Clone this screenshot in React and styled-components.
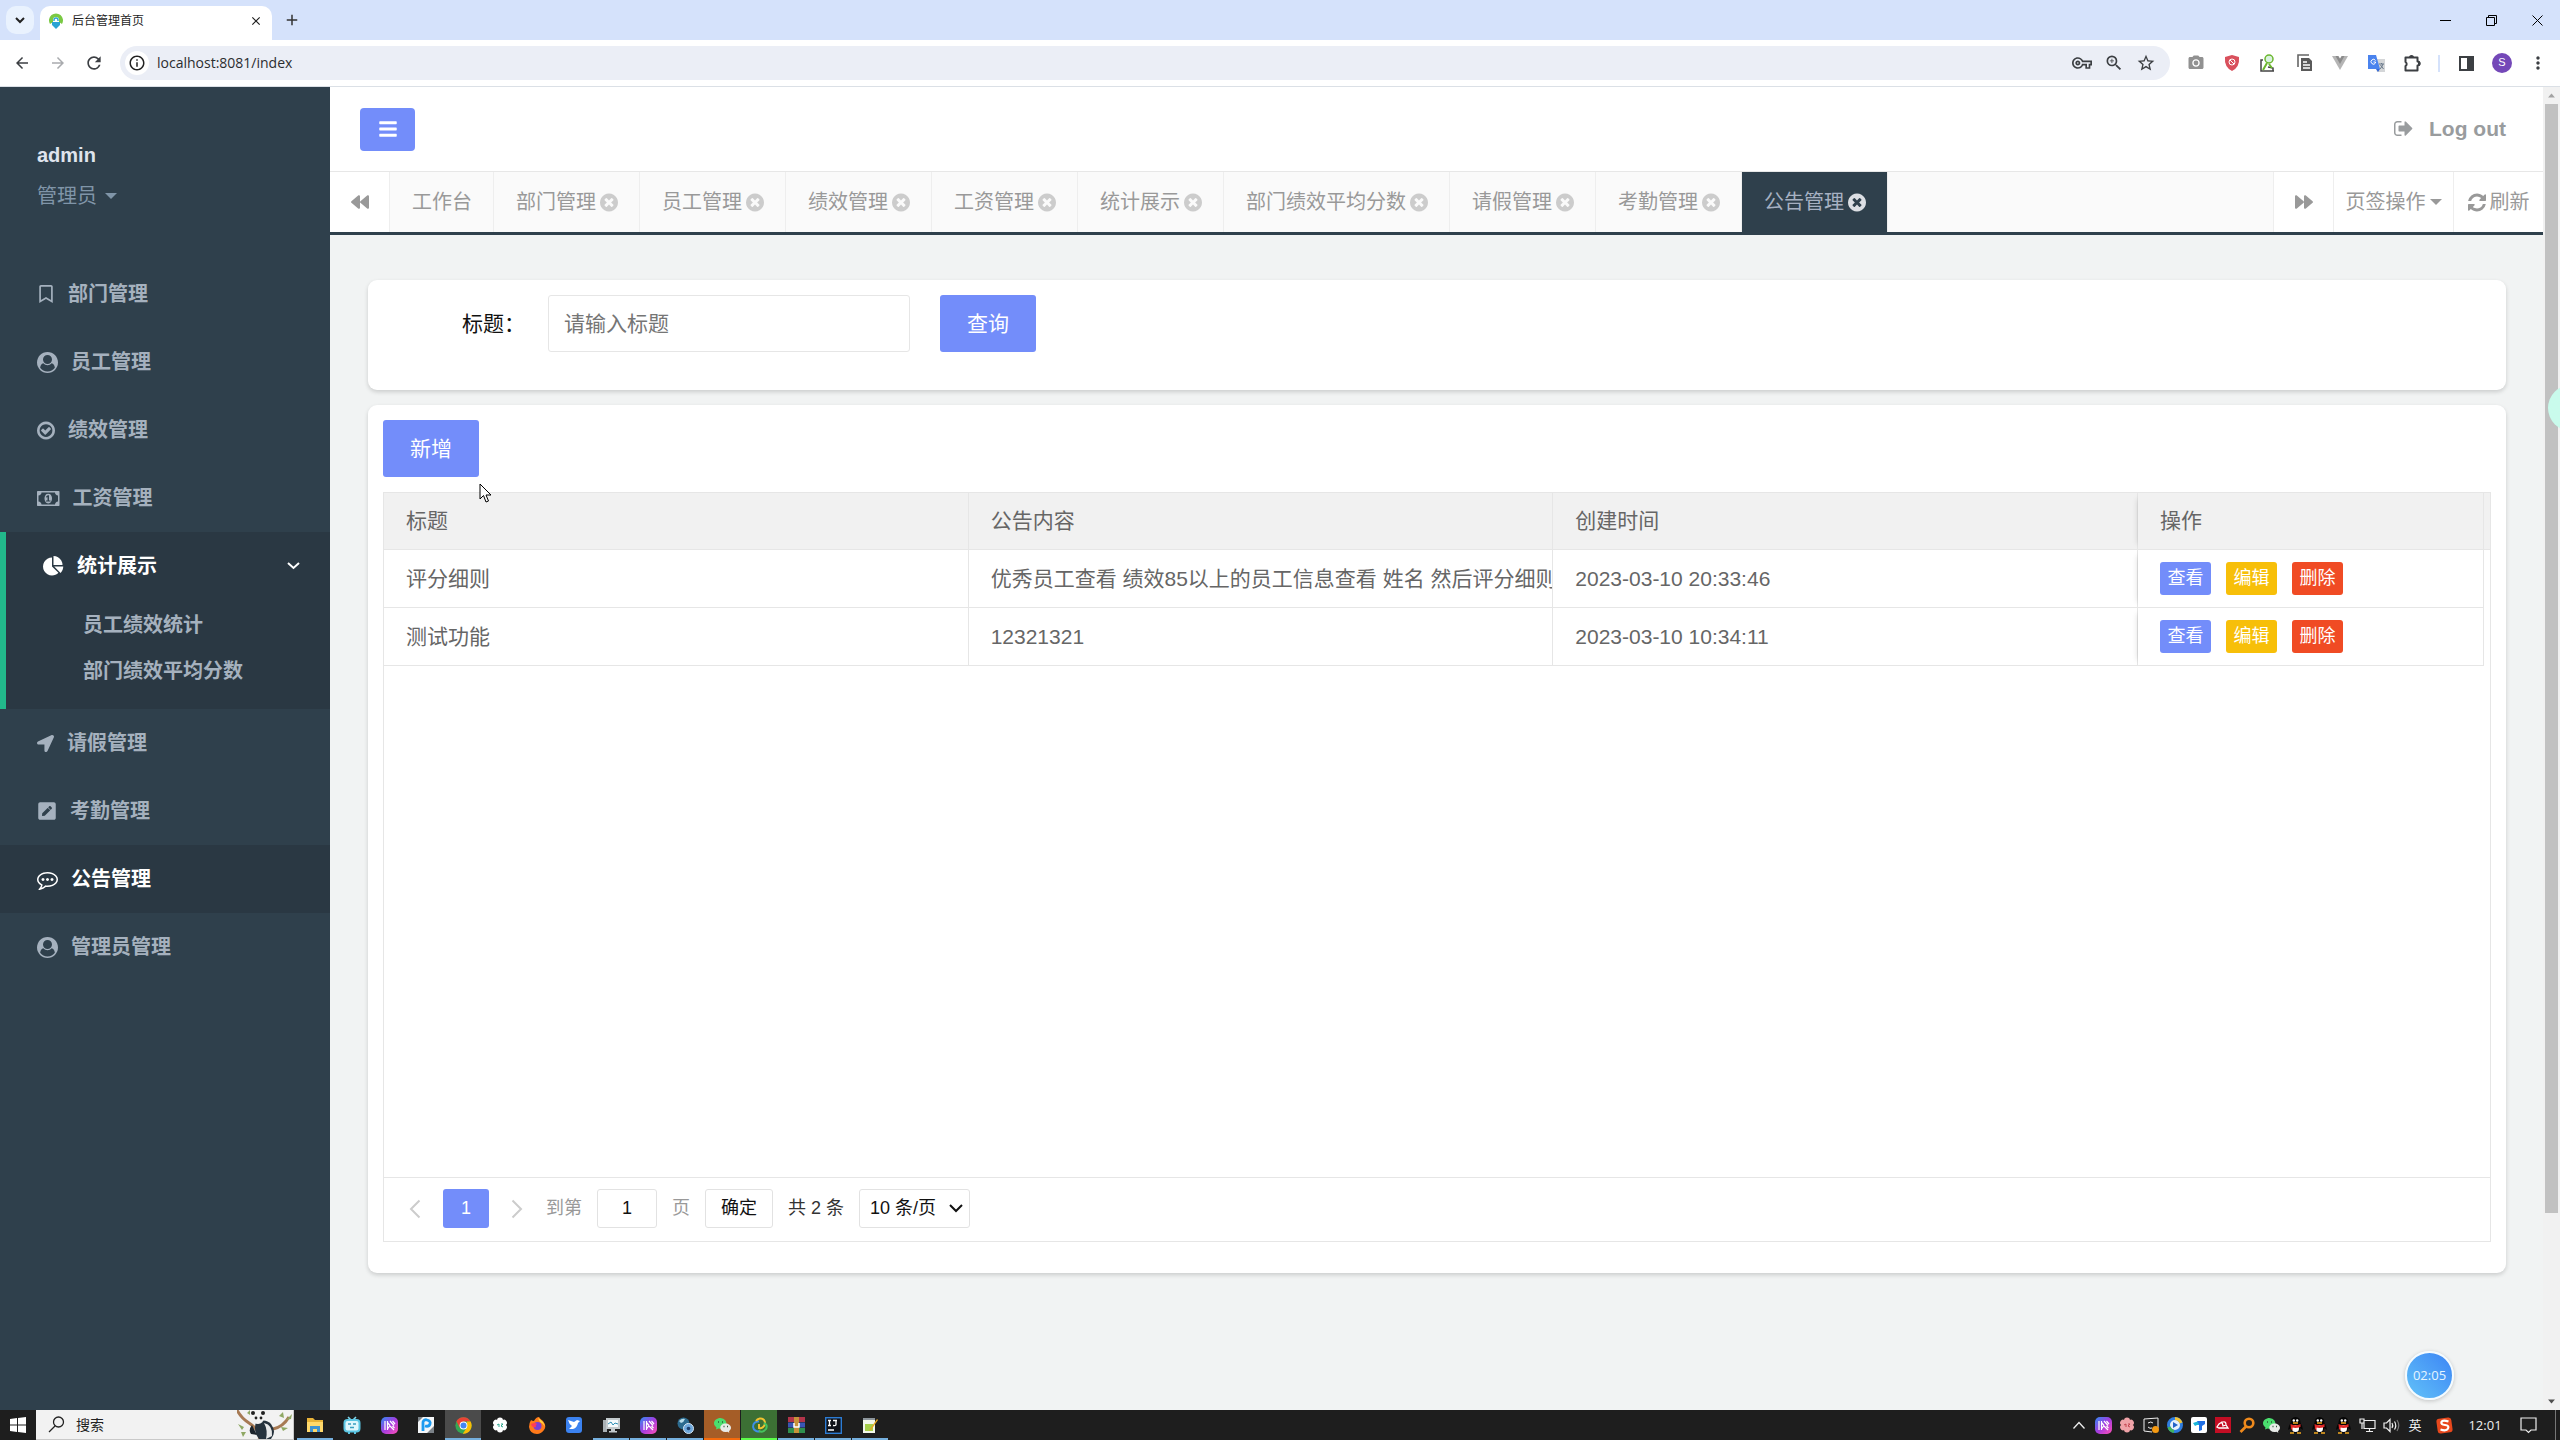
import React from 'react';
import styled, { createGlobalStyle, css } from 'styled-components';
import { FaBackward, FaBars, FaForward, FaLocationArrow, FaPenSquare, FaRegBookmark } from 'react-icons/fa';
import {
	MdAdd,
	MdArrowBack,
	MdArrowForward,
	MdClose,
	MdInfoOutline,
	MdMoreVert,
	MdOutlineExtension,
	MdOutlineVpnKey,
	MdPhotoCamera,
	MdRefresh,
	MdStarOutline,
	MdZoomIn,
} from 'react-icons/md';

const sans = `"Liberation Sans", "Noto Sans CJK SC", sans-serif`;
const systemFont = `"Open Sans", "Noto Sans CJK SC", sans-serif`;

/* Font Awesome 4 glyphs: x offset, width, path */
const glyphs = {
	user: [
		0,
		1792,
		'M1523 1339q-22-155-87.5-257.5t-184.5-118.5q-67 74-159.5 115.5t-195.5 41.5-195.5-41.5-159.5-115.5q-119 16-184.5 118.5t-87.5 257.5q106 150 271 237.5t356 87.5 356-87.5 271-237.5zm-243-699q0-159-112.5-271.5t-271.5-112.5-271.5 112.5-112.5 271.5 112.5 271.5 271.5 112.5 271.5-112.5 112.5-271.5zm512 256q0 182-71 347.5t-190.5 286-285.5 191.5-349 71q-182 0-348-71t-286-191-191-286-71-348 71-348 191-286 286-191 348-71 348 71 286 191 191 286 71 348z',
	],
	check: [
		128,
		1536,
		'M1299 813l-422 422q-19 19-45 19t-45-19l-294-294q-19-19-19-45t19-45l102-102q19-19 45-19t45 19l147 147 275-275q19-19 45-19t45 19l102 102q19 19 19 45t-19 45zm141 83q0-148-73-273t-198-198-273-73-273 73-198 198-73 273 73 273 198 198 273 73 273-73 198-198 73-273zm224 0q0 209-103 385.5t-279.5 279.5-385.5 103-385.5-103-279.5-279.5-103-385.5 103-385.5 279.5-279.5 385.5-103 385.5 103 279.5 279.5 103 385.5z',
	],
	money: [
		0,
		1920,
		'M768 1152h384v-96h-128v-448h-114l-148 137 77 80q42-37 55-57h2v288h-128v96zm512-256q0 70-21 142t-59.5 134-101.5 101-138 39-138-39-101.5-101-59.5-134-21-142 21-142 59.5-134 101.5-101 138-39 138 39 101.5 101 59.5 134 21 142zm512 256v-512q-106 0-181-75t-75-181h-1152q0 106-75 181t-181 75v512q106 0 181 75t75 181h1152q0-106 75-181t181-75zm128-832v1152q0 26-19 45t-45 19h-1792q-26 0-45-19t-19-45v-1152q0-26 19-45t45-19h1792q26 0 45 19t19 45z',
	],
	pie: [
		0,
		1792,
		'M768 890l546 546q-106 108-247.5 168t-298.5 60q-209 0-385.5-103t-279.5-279.5-103-385.5 103-385.5 279.5-279.5 385.5-103v762zm187 6h773q0 157-60 298.5t-168 247.5zm709-128h-768v-768q209 0 385.5 103t279.5 279.5 103 385.5z',
	],
	comment: [
		0,
		1792,
		'M640 896q0 53-37.5 90.5t-90.5 37.5-90.5-37.5-37.5-90.5 37.5-90.5 90.5-37.5 90.5 37.5 37.5 90.5zm384 0q0 53-37.5 90.5t-90.5 37.5-90.5-37.5-37.5-90.5 37.5-90.5 90.5-37.5 90.5 37.5 37.5 90.5zm384 0q0 53-37.5 90.5t-90.5 37.5-90.5-37.5-37.5-90.5 37.5-90.5 90.5-37.5 90.5 37.5 37.5 90.5zm-512-512q-204 0-381.5 69.5t-282 187.5-104.5 255q0 112 71.5 213.5t201.5 175.5l87 50-27 96q-24 91-70 172 152-63 275-171l43-38 57 6q69 8 130 8 204 0 381.5-69.5t282-187.5 104.5-255-104.5-255-282-187.5-381.5-69.5zm896 512q0 174-120 321.5t-326 233-450 85.5q-70 0-145-8-198 175-460 242-49 14-114 22h-5q-15 0-27-10.5t-16-27.5v-1q-3-4-.5-12t2-10 4.5-9.5l6-9 7-8.5 8-9q7-8 31-34.5t34.5-38 31-39.5 32.5-51 27-59 26-76q-157-89-247.5-220t-90.5-281q0-130 71-248.5t191-204.5 286-136.5 348-50.5q244 0 450 85.5t326 233 120 321.5z',
	],
	times: [
		128,
		1536,
		'M1277 1122q0-26-19-45l-181-181 181-181q19-19 19-45 0-27-19-46l-90-90q-19-19-46-19-26 0-45 19l-181 181-181-181q-19-19-45-19-27 0-46 19l-90 90q-19 19-19 46 0 26 19 45l181 181-181 181q-19 19-19 45 0 27 19 46l90 90q19 19 46 19 26 0 45-19l181-181 181 181q19 19 45 19 27 0 46-19l90-90q19-19 19-46zm387-226q0 209-103 385.5t-279.5 279.5-385.5 103-385.5-103-279.5-279.5-103-385.5 103-385.5 279.5-279.5 385.5-103 385.5 103 279.5 279.5 103 385.5z',
	],
	signOut: [
		64,
		1600,
		'M704 1440q0 4 1 20t.5 26.5-3 23.5-10 19.5-20.5 6.5h-320q-119 0-203.5-84.5t-84.5-203.5v-704q0-119 84.5-203.5t203.5-84.5h320q13 0 22.5 9.5t9.5 22.5q0 4 1 20t.5 26.5-3 23.5-10 19.5-20.5 6.5h-320q-66 0-113 47t-47 113v704q0 66 47 113t113 47h312l11.5 1 11.5 3 8 5.5 7 9 2 13.5zm928-544q0 26-19 45l-544 544q-19 19-45 19t-45-19-19-45v-288h-448q-26 0-45-19t-19-45v-384q0-26 19-45t45-19h448v-288q0-26 19-45t45-19 45 19l544 544q19 19 19 45z',
	],
	refresh: [
		0,
		1536,
		'M1511 1056q0 5-1 7-64 268-268 434.5t-478 166.5q-146 0-282.5-55t-243.5-157l-129 129q-19 19-45 19t-45-19-19-45v-448q0-26 19-45t45-19h448q26 0 45 19t19 45-19 45l-137 137q71 66 161 102t187 36q134 0 250-65t186-179q11-17 53-117 8-23 30-23h192q13 0 22.5 9.5t9.5 22.5zm25-800v448q0 26-19 45t-45 19h-448q-26 0-45-19t-19-45 19-45l138-138q-148-137-349-137-134 0-250 65t-186 179q-11 17-53 117-8 23-30 23h-199q-13 0-22.5-9.5t-9.5-22.5v-7q65-268 270-434.5t480-166.5q146 0 284 55.5t245 156.5l130-129q19-19 45-19t45 19 19 45z',
	],
};

const Glyph = ({ name }) => {
	const [x, width, d] = glyphs[name];
	return (
		<GlyphSvg viewBox={`${x} 0 ${width} 1792`} aria-hidden="true">
			<path fill="currentColor" d={d} />
		</GlyphSvg>
	);
};

const menu = [
	{ label: '部门管理', icon: <FaRegBookmark size={18} viewBox="0 0 384 512" /> },
	{ label: '员工管理', icon: <Glyph name="user" /> },
	{ label: '绩效管理', icon: <Glyph name="check" /> },
	{ label: '工资管理', icon: <Glyph name="money" /> },
	{
		label: '统计展示',
		icon: <Glyph name="pie" />,
		children: ['员工绩效统计', '部门绩效平均分数'],
	},
	{ label: '请假管理', icon: <FaLocationArrow size={17} /> },
	{ label: '考勤管理', icon: <FaPenSquare size={20} viewBox="0 0 448 512" /> },
	{ label: '公告管理', icon: <Glyph name="comment" />, active: true },
	{ label: '管理员管理', icon: <Glyph name="user" /> },
];

const tabs = ['部门管理', '员工管理', '绩效管理', '工资管理', '统计展示', '部门绩效平均分数', '请假管理', '考勤管理', '公告管理'];

const rows = [
	{
		title: '评分细则',
		content: '优秀员工查看 绩效85以上的员工信息查看 姓名 然后评分细则',
		time: '2023-03-10 20:33:46',
	},
	{ title: '测试功能', content: '12321321', time: '2023-03-10 10:34:11' },
];

/* ---- small drawings for the browser bar and the task bar ---- */

const Favicon = () => (
	<svg width="16" height="16" viewBox="0 0 16 16">
		<path d="M2 11a7 7 0 1 1 12 0l-3-2V7a3 3 0 0 0-6 0v2z" fill="#7ac943" />
		<path d="M6 8V7a2 2 0 0 1 4 0v1" fill="none" stroke="#2aa3d4" strokeWidth="1.4" />
		<path d="M4 9h8v3l-4 4-4-4z" fill="#2aa3d4" />
	</svg>
);

const RobotIcon = () => (
	<svg width="18" height="18" viewBox="0 0 18 18">
		<path d="M5 1l3 3M13 1l-3 3" stroke="#7fd8ee" strokeWidth="1.6" />
		<rect x="1.5" y="4" width="15" height="11.5" rx="3" fill="#dff7fd" stroke="#5cc6e3" strokeWidth="2" />
		<path d="M5 8h3M10 8h3M7 11.5h4" stroke="#3a9fc0" strokeWidth="1.5" />
		<path d="M5 17h2M11 17h2" stroke="#5cc6e3" strokeWidth="2" />
	</svg>
);

const MazeIcon = () => (
	<svg width="17" height="17" viewBox="0 0 17 17">
		<defs>
			<linearGradient id="maze" x1="0" y1="0" x2="1" y2="1">
				<stop offset="0" stopColor="#2f8bf5" />
				<stop offset=".5" stopColor="#a43ce0" />
				<stop offset="1" stopColor="#ff4fb4" />
			</linearGradient>
		</defs>
		<rect width="17" height="17" rx="5" fill="url(#maze)" />
		<path d="M4 4v9M6.500 4v9M9 8.500l-2.500-3M9 8.500l-2.500 3.500M9 4l4 4.500M11.500 4L14 7M9 9l4 4M11.500 9l2 2" stroke="#fff" strokeWidth="1.200" />
	</svg>
);

const FolderIcon = () => (
	<svg width="18" height="16" viewBox="0 0 18 16">
		<path d="M1 1h6l2 2h8v12H1z" fill="#e8b339" />
		<path d="M1 5h16v10H1z" fill="#ffd86b" />
		<path d="M4 15V9h10v6h-3v-3H7v3z" fill="#3f93d2" />
	</svg>
);

const PencilPIcon = () => (
	<svg width="16" height="16" viewBox="0 0 16 16">
		<path d="M0 0h16v16H0z" fill="#f4f6f8" />
		<path d="M9 16l7-7v7zM0 5l5-5H0z" fill="#7b8288" />
		<path d="M5 14V5a3 3 0 0 1 4-2q4 1 3 4t-5 2" fill="none" stroke="#1d9bf0" strokeWidth="2.800" />
	</svg>
);

const ChromeIcon = () => (
	<svg width="17" height="17" viewBox="0 0 48 48">
		<circle cx="24" cy="24" r="23" fill="#34a853" />
		<path d="M24 1a23 23 0 0 1 20 12H24L13 30 4 12A23 23 0 0 1 24 1z" fill="#ea4335" />
		<path d="M44 13a23 23 0 0 1-22 34l12-18V13z" fill="#fbbc05" />
		<circle cx="24" cy="24" r="11" fill="#fff" />
		<circle cx="24" cy="24" r="8.500" fill="#4285f4" />
	</svg>
);

const FlowerIcon = ({ color, core }) => (
	<svg width="16" height="16" viewBox="0 0 16 16">
		{[0, 60, 120, 180, 240, 300].map((angle) => (
			<circle key={angle} cx="8" cy="3.500" r="3" fill={color} transform={`rotate(${angle} 8 8)`} />
		))}
		<circle cx="8" cy="8" r="3.500" fill={color} />
		<path d="M5 8l2-1v3M9 7h2l-2 2 2 1" stroke={core} fill="none" />
	</svg>
);

const FirefoxIcon = () => (
	<svg width="17" height="17" viewBox="0 0 17 17">
		<path d="M2 3q1 1 3 1 2-4 5-4 1 2 4 4 4 5 1 9-3 4-7 4-7 0-8-7 0-4 2-7z" fill="#ff7a1a" />
		<path d="M9 1q6 3 7 9-2-4-5-5z" fill="#ffd53d" />
		<circle cx="8.500" cy="9" r="4" fill="#7b3fd6" />
		<path d="M2 7q4-2 6 0-2 1-1 3-4 1-5-3z" fill="#ff3d57" />
	</svg>
);

const BirdIcon = () => (
	<svg width="16" height="16" viewBox="0 0 16 16">
		<rect width="16" height="16" rx="3" fill="#3b82f0" />
		<path d="M2 3l6 2 3-2 3 1-2 2q-1 5-5 6H3l3-3q-3-2-4-6z" fill="#fff" />
	</svg>
);

const MonitorIcon = () => (
	<svg width="17" height="16" viewBox="0 0 17 16">
		<path d="M0 3h4v12H0z" fill="#aab1b5" />
		<path d="M3 1h14v11H3z" fill="#c3cacd" />
		<path d="M5 3h10v7H5z" fill="#f6fbfd" />
		<path d="M5 7l3-2 2 3 2-2 3 1" stroke="#2e8fb5" fill="none" />
		<path d="M8 12h4v2H8zM6 14h8v1.500H6z" fill="#c5cbce" />
	</svg>
);

const GlobesIcon = () => (
	<svg width="17" height="17" viewBox="0 0 17 17">
		<circle cx="6.500" cy="6.500" r="6" fill="#2c6b8f" />
		<path d="M2 4q3-3 6-2-1 3-4 4zM7 9l4-3v5z" fill="#b8dbe8" />
		<circle cx="11.500" cy="11.500" r="5" fill="#6fa8dc" stroke="#d7e6f2" />
		<circle cx="11.500" cy="11.500" r="1.800" fill="#1c3f6e" />
	</svg>
);

const WechatIcon = () => (
	<svg width="17" height="15" viewBox="0 0 17 15">
		<path d="M6.500 0C3 0 0 2.300 0 5.300 0 7 1 8.500 2.500 9.500L2 11.500l2.500-1q6 1 8-3.500Q13 1 6.500 0z" fill="#4ade6e" />
		<path d="M11.500 5.500c3 0 5.500 1.900 5.500 4.300 0 1.300-.8 2.500-2 3.300l.3 1.700-2-1c-4 .8-7-1-7-4 0-2.400 2.300-4.300 5.200-4.300z" fill="#e8ebe8" />
		<path d="M4 4h1M8 4h1M9.500 8.500h1M13 8.500h1" stroke="#2d5a3a" strokeWidth="1.300" />
	</svg>
);

const LoopIcon = () => (
	<svg width="17" height="17" viewBox="0 0 17 17" fill="none" strokeWidth="2">
		<path d="M8 4.500a5 5 0 1 0 1 9.500" stroke="#3f8fe8" />
		<path d="M5 4a5 5 0 0 1 8-1q2 3 0 6t-5 2V7" stroke="#f2c230" />
		<path d="M13 6q4 2 2 6-3 4-7 2" stroke="#46c25c" />
	</svg>
);

const ArchiveIcon = () => (
	<svg width="17" height="16" viewBox="0 0 17 16">
		<path d="M0 0h17v5H0z" fill="#b2344a" />
		<path d="M0 5.500h17v5H0z" fill="#3a56b5" />
		<path d="M0 11h17v5H0z" fill="#2f8f4e" />
		<path d="M6 0h5v16H6z" fill="#c7923a" />
		<path d="M6 6v4h5V6" stroke="#fff" strokeWidth="1.500" fill="none" />
	</svg>
);

const IdeIcon = () => (
	<svg width="17" height="17" viewBox="0 0 17 17">
		<rect x=".7" y=".7" width="15.600" height="15.600" fill="#10131a" stroke="#2c7cd4" strokeWidth="1.400" />
		<path d="M3 3.500h3M4.500 3.500v5M3 8.500h3M8 3.500h4M11 3.500v4q0 1.500-3 1M3 13h6" stroke="#fff" strokeWidth="1.300" fill="none" />
	</svg>
);

const NotepadIcon = () => (
	<svg width="16" height="17" viewBox="0 0 16 17">
		<path d="M1 2h12v14H1z" fill="#f3f7ea" />
		<path d="M3 7h8v7H3z" fill="#a6cf4a" />
		<path d="M1 1h12v2H1z" fill="#8d969c" />
		<path d="M15 2L8 12l-1 2 2-1 7-10z" fill="#e5a823" />
	</svg>
);

const PandaArt = () => (
	<svg width="56" height="29" viewBox="0 0 56 29">
		<path d="M0 0q4 8 12 13t14 16M22 29q4-8 14-10t16-12" fill="none" stroke="#a77a54" strokeWidth="3" />
		<path d="M19 12q10-4 15 2 6 8 0 15H22q-6-8-3-17z" fill="#26323d" />
		<path d="M27 13q9 2 8 13l-6 3q2-9-2-16z" fill="#e8e9ea" />
		<circle cx="21" cy="8" r="6" fill="#f2f2f2" />
		<circle cx="16" cy="3" r="2" fill="#222" />
		<circle cx="26" cy="3" r="2" fill="#222" />
		<circle cx="19" cy="8" r="1.400" fill="#222" />
		<circle cx="24" cy="8" r="1.400" fill="#222" />
		<path d="M15 15q-4 5-1 9l6 1z" fill="#1c242c" />
		<path d="M1 14l6 3-2 3zM10 3l3-3v5zM42 6l4-4 1 6zM49 10l6-6-1 5zM44 17l7 1-5 3zM4 22l5 0-3 5z" fill="#8fa864" />
	</svg>
);

const PlayIcon = () => (
	<svg width="16" height="16" viewBox="0 0 16 16">
		<circle cx="8" cy="8" r="6.500" fill="#e8f1fb" stroke="#2f7de0" strokeWidth="3" />
		<path d="M8 1.500A6.500 6.500 0 0 1 14 6" stroke="#f0c43a" strokeWidth="3" fill="none" />
		<path d="M2 10a6.500 6.500 0 0 0 5 4.500" stroke="#41b35d" strokeWidth="3" fill="none" />
		<path d="M6 5l5 3-5 3z" fill="#2563c9" />
	</svg>
);

const TravelIcon = () => (
	<svg width="16" height="16" viewBox="0 0 16 16">
		<rect width="16" height="16" rx="2" fill="#fff" />
		<path d="M2 6l6-2v4H6L4 9z" fill="#19b5d8" />
		<path d="M6 4h8v3l-3 2v4l-3 1V7z" fill="#1f6fe5" />
	</svg>
);

const CloudIcon = () => (
	<svg width="16" height="16" viewBox="0 0 16 16">
		<rect width="16" height="16" fill="#c40e24" />
		<path d="M4 11h9l-2-3-3 1-1-4-3 2-2 3zM8 5q3-1 3 3" stroke="#fff" fill="none" strokeWidth="1.300" />
	</svg>
);

const OrangeSearchIcon = () => (
	<svg width="16" height="16" viewBox="0 0 16 16" fill="none" stroke="#f08a1c" strokeWidth="2.600">
		<circle cx="10" cy="6" r="4.300" />
		<path d="M7 9.500L1.500 15" />
	</svg>
);

const PenguinIcon = () => (
	<svg width="15" height="17" viewBox="0 0 15 17">
		<path d="M7.500 0q5 0 5 6 3 5 2 7l-2-2q-1 5-5 5t-5-5l-2 2q-1-2 2-7 0-6 5-6z" fill="#050505" />
		<ellipse cx="7.500" cy="11.500" rx="3.500" ry="3.500" fill="#fff" />
		<path d="M2.500 7q5 2.500 10 0v3q-5 1.500-8 .5v3L3 12z" fill="#e02828" />
		<circle cx="5.800" cy="3.500" r="1.200" fill="#fff" />
		<circle cx="9.200" cy="3.500" r="1.200" fill="#fff" />
		<path d="M5 6h5M2 16h4M9 16h4" stroke="#f4a91f" strokeWidth="1.500" />
	</svg>
);

const SyncIcon = () => (
	<svg width="17" height="16" viewBox="0 0 17 16" fill="none" stroke="#eee">
		<path d="M1 2l14-1v10M1 2v12l8 1M5 6q3-2 5 0M5 10q2 2 4 1" />
		<circle cx="12.500" cy="12.500" r="3.500" fill="#f59a12" stroke="none" />
	</svg>
);

const ScreenIcon = () => (
	<svg width="17" height="15" viewBox="0 0 17 15" fill="none" stroke="#eee" strokeWidth="1.200">
		<path d="M5 2.500h11v8H5zM7 13.500h7M10.500 10.500v3M1 1h4v4H1zM3 5v6" />
	</svg>
);

const VolumeIcon = () => (
	<svg width="17" height="15" viewBox="0 0 17 15" fill="none" stroke="#eee" strokeWidth="1.200">
		<path d="M1 5h2.500L7 1.500v12L3.500 10H1zM9 5q1.500 2.500 0 5M11.500 3.500q2.500 4 0 8" />
		<path d="M14 2q3.500 5.500 0 11" stroke="#777" />
	</svg>
);

const SogouIcon = () => (
	<svg width="17" height="17" viewBox="0 0 17 17">
		<rect x="1" y="1" width="15" height="15" rx="3" fill="#e8481c" transform="rotate(-8 8.500 8.500)" />
		<path d="M12.500 4.500q-6-2-7 .5t3.500 3 3 3.500-7.500 1" stroke="#fff" strokeWidth="2.200" fill="none" />
	</svg>
);

const UpIcon = () => (
	<svg width="14" height="9" viewBox="0 0 14 9" fill="none" stroke="#eee" strokeWidth="1.300">
		<path d="M1.500 7.500l5.500-6 5.500 6" />
	</svg>
);

const BubbleIcon = () => (
	<svg width="17" height="17" viewBox="0 0 17 17" fill="none" stroke="#eee" strokeWidth="1.200">
		<path d="M1 1h15v12h-5l-2.500 2.500L6 13H1z" />
	</svg>
);

const WindowsIcon = () => (
	<svg width="16" height="16" viewBox="0 0 16 16" fill="#fff">
		<path d="M0 2l7-1v6.500H0zM8 1l8-1v7.500H8zM0 8.500h7V15l-7-1zM8 8.500h8V16l-8-1z" />
	</svg>
);

const apps = [
	{ name: '文件资源管理器', icon: <FolderIcon />, open: true },
	{ name: '哔哩哔哩', icon: <RobotIcon /> },
	{ name: 'Maze', icon: <MazeIcon /> },
	{ name: 'P', icon: <PencilPIcon /> },
	{ name: 'Chrome', icon: <ChromeIcon />, open: true, tone: '#4b4b4b' },
	{ name: 'Flower', icon: <FlowerIcon color="#fff" core="#2ca58d" /> },
	{ name: 'Firefox', icon: <FirefoxIcon /> },
	{ name: 'Bird', icon: <BirdIcon /> },
	{ name: '远程', icon: <MonitorIcon />, open: true },
	{ name: 'Maze 2', icon: <MazeIcon />, open: true },
	{ name: '网络', icon: <GlobesIcon />, open: true },
	{ name: '微信', icon: <WechatIcon />, open: true, tone: '#a55d27', line: '#f46a0c' },
	{ name: 'Navicat', icon: <LoopIcon />, open: true, tone: '#3c7034', line: '#5cff4a' },
	{ name: 'WinRAR', icon: <ArchiveIcon />, open: true },
	{ name: 'IDEA', icon: <IdeIcon />, open: true },
	{ name: 'Notepad', icon: <NotepadIcon />, open: true },
];

const tray = [
	UpIcon,
	MazeIcon,
	() => <FlowerIcon color="#f0a3a8" core="#c4444e" />,
	SyncIcon,
	PlayIcon,
	TravelIcon,
	CloudIcon,
	OrangeSearchIcon,
	WechatIcon,
	PenguinIcon,
	PenguinIcon,
	PenguinIcon,
	ScreenIcon,
	VolumeIcon,
];

const BrowserBar = () => (
	<header>
		<TabStrip>
			<TabSearch aria-label="搜索标签页">
				<svg width="10" height="7" viewBox="0 0 10 7" fill="none" stroke="#222" strokeWidth="2">
					<path d="M1 1l4 4 4-4" />
				</svg>
			</TabSearch>
			<BrowserTab>
				<Favicon />
				<span>后台管理首页</span>
				<MdClose size={14} />
			</BrowserTab>
			<NewTab aria-label="新标签页">
				<MdAdd size={18} />
			</NewTab>
			<WindowButtons>
				<button aria-label="最小化">
					<svg width="11" height="11" viewBox="0 0 11 11" stroke="#000">
						<path d="M0 5.500h11" />
					</svg>
				</button>
				<button aria-label="还原">
					<svg width="11" height="11" viewBox="0 0 11 11" fill="none" stroke="#000">
						<path d="M.5 2.500h8v8h-8zM2.500 2.500v-2h8v8h-2" />
					</svg>
				</button>
				<button aria-label="关闭">
					<svg width="11" height="11" viewBox="0 0 11 11" stroke="#000">
						<path d="M.5.5l10 10M10.500.5l-10 10" />
					</svg>
				</button>
			</WindowButtons>
		</TabStrip>
		<Toolbar>
			<ToolButton aria-label="后退">
				<MdArrowBack size={18} />
			</ToolButton>
			<ToolButton aria-label="前进" $color="#a9abae">
				<MdArrowForward size={18} />
			</ToolButton>
			<ToolButton aria-label="重新加载">
				<MdRefresh size={20} />
			</ToolButton>
			<Omnibox>
				<SiteInfo aria-label="网站信息">
					<MdInfoOutline size={18} />
				</SiteInfo>
				<Address aria-label="地址" defaultValue="localhost:8081/index" />
				<OmniButton aria-label="密码">
					<MdOutlineVpnKey size={20} />
				</OmniButton>
				<OmniButton aria-label="缩放">
					<MdZoomIn size={20} />
				</OmniButton>
				<OmniButton aria-label="收藏">
					<MdStarOutline size={20} />
				</OmniButton>
			</Omnibox>
			<Extensions>
				<ToolButton aria-label="截图" $color="#919191">
					<MdPhotoCamera size={18} />
				</ToolButton>
				<ToolButton aria-label="拦截">
					<svg width="16" height="16" viewBox="0 0 16 16">
						<path d="M8 0l7 2q1 10-7 14Q0 12 1 2z" fill="#d9505c" />
						<circle cx="8" cy="7" r="3" fill="none" stroke="#fff" />
						<path d="M6 5l4 4" stroke="#fff" />
					</svg>
				</ToolButton>
				<ToolButton aria-label="助手">
					<svg width="16" height="18" viewBox="0 0 16 18" fill="none">
						<path d="M3 6H1v11h13M8 13l5 1v3" stroke="#444" strokeWidth="1.500" />
						<circle cx="9" cy="5" r="4" fill="#d9f2e0" stroke="#6cb72e" strokeWidth="1.500" />
						<path d="M7 9l-4 7M9 10l3 4" stroke="#6cb72e" strokeWidth="2" />
					</svg>
				</ToolButton>
				<ToolButton aria-label="复制">
					<svg width="15" height="18" viewBox="0 0 15 18">
						<path d="M1 13V1h11" fill="none" stroke="#666" strokeWidth="1.600" />
						<path d="M4 4h8l3 3v10H4z" fill="#5a5a5a" />
						<path d="M6 8h4M6 11h7M6 14h7" stroke="#fff" strokeWidth="1.300" />
					</svg>
				</ToolButton>
				<ToolButton aria-label="Vue">
					<svg width="16" height="14" viewBox="0 0 16 14">
						<path d="M0 0h16L8 14z" fill="#b5b5b5" />
						<path d="M3.500 0h3L8 2.500 9.500 0h3L8 8z" fill="#8c8c8c" />
						<path d="M6.500 0h3L8 2.500z" fill="#fff" />
					</svg>
				</ToolButton>
				<ToolButton aria-label="翻译">
					<svg width="17" height="17" viewBox="0 0 17 17">
						<path d="M6 4h11v13H9z" fill="#d4d6d8" />
						<path d="M0 0h8l4 14H0z" fill="#4a83ee" />
						<path d="M8 14h4l-2 3z" fill="#3367d6" />
						<path d="M7.500 5.500A2.400 2.400 0 1 0 7.500 8V7H5.500" fill="none" stroke="#fff" />
						<path d="M11 9h5M13.500 8v1M15 9q-1 3-3 5M12.500 10l3 4" stroke="#68788a" fill="none" />
					</svg>
				</ToolButton>
				<ToolButton aria-label="扩展程序">
					<svg width="17" height="18" viewBox="0 0 17 18">
						<path
							d="M1.500 3.500h12v4a2 2 0 0 1 0 4v5h-12v-4.500a2.300 2.300 0 0 0 0-4z"
							fill="none"
							stroke="#3c3f43"
							strokeWidth="2"
							strokeLinejoin="round"
						/>
						<path d="M5 3.500a2.500 2.500 0 0 1 5 0zM14 7a2.500 2.500 0 0 1 0 5z" fill="#3c3f43" />
					</svg>
				</ToolButton>
				<Divider />
				<ToolButton aria-label="侧边栏">
					<svg width="15" height="15" viewBox="0 0 15 15">
						<path d="M1 1h13v13H1z" fill="none" stroke="#3c3f43" strokeWidth="2" />
						<path d="M8 1h6v13H8z" fill="#3c3f43" />
					</svg>
				</ToolButton>
				<Avatar aria-label="个人资料">S</Avatar>
				<ToolButton aria-label="更多">
					<MdMoreVert size={20} />
				</ToolButton>
			</Extensions>
		</Toolbar>
	</header>
);

const Sidebar = () => (
	<Side>
		<Profile>
			<strong>admin</strong>
			<a href="#role">
				管理员
				<Caret />
			</a>
		</Profile>
		<nav>
			{menu.map(({ label, icon, active, children }) => (
				<MenuGroup key={label} $open={Boolean(children)}>
					<MenuLink href="#menu" $active={active || Boolean(children)}>
						{icon}
						<span>{label}</span>
						{children && (
							<svg width="13" height="8" viewBox="0 0 13 8" fill="none" stroke="#fff" strokeWidth="2">
								<path d="M1 1l5.500 5L12 1" />
							</svg>
						)}
					</MenuLink>
					{children && (
						<SubMenu>
							{children.map((child) => (
								<a href="#sub" key={child}>
									{child}
								</a>
							))}
						</SubMenu>
					)}
				</MenuGroup>
			))}
		</nav>
	</Side>
);

const Notices = () => (
	<>
		<SearchCard>
			<label htmlFor="title">标题：</label>
			<TitleInput id="title" placeholder="请输入标题" />
			<PrimaryButton>查询</PrimaryButton>
		</SearchCard>
		<Card>
			<PrimaryButton>新增</PrimaryButton>
			<TableBox>
				<TableArea>
					<Table>
						<colgroup>
							<col />
							<col />
							<col />
							<col className="actions" />
							<col className="gutter" />
						</colgroup>
						<thead>
							<tr>
								<th>标题</th>
								<th>公告内容</th>
								<th>创建时间</th>
								<FixedHead>操作</FixedHead>
								<th />
							</tr>
						</thead>
						<tbody>
							{rows.map((row) => (
								<tr key={row.time}>
									<td>{row.title}</td>
									<td>{row.content}</td>
									<td>{row.time}</td>
									<FixedCell>
										<Actions>
											<ActionButton $color="#738dfa">查看</ActionButton>
											<ActionButton $color="#f7bf09">编辑</ActionButton>
											<ActionButton $color="#f04b24">删除</ActionButton>
										</Actions>
									</FixedCell>
									<td />
								</tr>
							))}
						</tbody>
					</Table>
				</TableArea>
				<Pager>
					<PageArrow aria-label="上一页">
						<svg width="12" height="20" viewBox="0 0 12 20" fill="none" stroke="#ccc" strokeWidth="2">
							<path d="M10.500 1.500L2 10l8.500 8.500" />
						</svg>
					</PageArrow>
					<CurrentPage>1</CurrentPage>
					<PageArrow aria-label="下一页">
						<svg width="12" height="20" viewBox="0 0 12 20" fill="none" stroke="#ccc" strokeWidth="2">
							<path d="M1.500 1.500L10 10l-8.500 8.500" />
						</svg>
					</PageArrow>
					<JumpLabel>
						到第
						<input defaultValue="1" />
						页
					</JumpLabel>
					<ConfirmButton>确定</ConfirmButton>
					<Total>共 2 条</Total>
					<SizeWrap>
						<select aria-label="每页条数" defaultValue="10">
							<option value="10">10 条/页</option>
							<option value="20">20 条/页</option>
						</select>
						<svg width="14" height="9" viewBox="0 0 14 9" fill="none" stroke="#111" strokeWidth="2">
							<path d="M1 1l6 6 6-6" />
						</svg>
					</SizeWrap>
				</Pager>
			</TableBox>
		</Card>
	</>
);

const Taskbar = () => (
	<TaskRow>
		<StartButton aria-label="开始">
			<WindowsIcon />
		</StartButton>
		<TaskSearch>
			<svg width="17" height="17" viewBox="0 0 17 17" fill="none" stroke="#222" strokeWidth="1.300">
				<circle cx="10.500" cy="6" r="5" />
				<path d="M7 10l-6 6" />
			</svg>
			<input aria-label="搜索" placeholder="搜索" />
			<PandaArt />
		</TaskSearch>
		<Apps>
			{apps.map(({ name, icon, open, tone, line }) => (
				<AppButton key={name} aria-label={name} $open={open} $tone={tone} $line={line}>
					{icon}
				</AppButton>
			))}
		</Apps>
		<Tray>
			{tray.map((Icon, index) => (
				<TrayItem key={index}>
					<Icon />
				</TrayItem>
			))}
			<TrayItem>英</TrayItem>
			<TrayItem $width={34}>
				<SogouIcon />
			</TrayItem>
			<TrayItem $width={48}>12:01</TrayItem>
			<TrayItem $width={38}>
				<BubbleIcon />
			</TrayItem>
			<DesktopEdge />
		</Tray>
	</TaskRow>
);

const App = () => (
	<Screen>
		<GlobalStyle />
		<BrowserBar />
		<Page>
			<Sidebar />
			<Main>
				<TopBar>
					<MenuToggle aria-label="菜单">
						<FaBars size={20} />
					</MenuToggle>
					<LogOut href="#logout">
						<Glyph name="signOut" />
						Log out
					</LogOut>
				</TopBar>
				<PageTabs>
					<TabControl $width={60} $edge="right" aria-label="向左">
						<FaBackward size={18} />
					</TabControl>
					<PageTab href="#tab">工作台</PageTab>
					{tabs.map((tab) => (
						<PageTab href="#tab" key={tab} $active={tab === '公告管理'}>
							{tab}
							<Glyph name="times" />
						</PageTab>
					))}
					<TabSpace />
					<TabControl $width={60} $edge="left" aria-label="向右">
						<FaForward size={18} />
					</TabControl>
					<TabControl $width={120} $edge="left">
						页签操作
						<Caret />
					</TabControl>
					<TabControl $width={90} $edge="left">
						<Glyph name="refresh" />
						刷新
					</TabControl>
				</PageTabs>
				<Content>
					<Notices />
				</Content>
			</Main>
			<ScrollBar>
				<ScrollArrow viewBox="0 0 17 17">
					<path d="M4 11l4.500-5L13 11z" fill="#a3a3a3" />
				</ScrollArrow>
				<ScrollThumb />
				<ScrollRest />
				<ScrollArrow viewBox="0 0 17 17">
					<path d="M4 6l4.500 5L13 6z" fill="#505050" />
				</ScrollArrow>
			</ScrollBar>
			<SideBubble />
			<Timer>02:05</Timer>
			<Pointer viewBox="0 0 13 21">
				<path d="M1 1v15l3.500-3.500L7 19l2.500-1-2.500-6h5z" fill="#fff" stroke="#000" />
			</Pointer>
		</Page>
		<Taskbar />
	</Screen>
);

export default App;

const GlobalStyle = createGlobalStyle`
	* {
		box-sizing: border-box;
	}
	body {
		margin: 0;
		font-family: ${sans};
		font-size: 20px;
		line-height: 1.4;
		color: #666;
	}
	button {
		border: 0;
		padding: 0;
		background: none;
		font-family: inherit;
		line-height: inherit;
		color: inherit;
	}
	input,
	select {
		font-family: inherit;
		line-height: inherit;
	}
	a {
		color: inherit;
		text-decoration: none;
	}
	svg {
		flex: none;
		display: block;
	}
`;

const Screen = styled.div`
	display: flex;
	flex-direction: column;
	min-height: 100vh;
`;

const GlyphSvg = styled.svg`
	height: 21px;
	width: auto;
	overflow: visible;
`;

const Caret = styled.i`
	border: 6px solid transparent;
	border-top-color: currentColor;
	border-bottom: 0;
`;

const TabStrip = styled.div`
	display: flex;
	height: 40px;
	padding: 6px 0 0 6px;
	background: #d5e2fb;
	font-family: ${systemFont};
`;

const TabSearch = styled.button`
	display: grid;
	place-items: center;
	width: 28px;
	height: 28px;
	border-radius: 10px;
	background: #e9f2fe;
`;

const BrowserTab = styled.div`
	display: flex;
	align-items: center;
	gap: 8px;
	width: 232px;
	margin-left: 6px;
	padding: 0 9px 4px 8px;
	border-radius: 10px 10px 0 0;
	background: #fff;
	color: #1f1f1f;
	font-size: 12px;
	span {
		flex: 1;
	}
`;

const NewTab = styled.button`
	display: grid;
	place-items: center;
	width: 40px;
	height: 28px;
	color: #333;
`;

const WindowButtons = styled.div`
	display: flex;
	height: 28px;
	margin-left: auto;
	button {
		display: grid;
		place-items: center;
		width: 46px;
	}
`;

const Toolbar = styled.div`
	display: flex;
	align-items: center;
	height: 47px;
	padding: 0 4px;
	border-bottom: 1px solid #dbe0e6;
	background: #fff;
`;

const ToolButton = styled.button`
	display: grid;
	place-items: center;
	width: 36px;
	height: 34px;
	color: ${({ $color }) => $color || '#3c3f43'};
`;

const Omnibox = styled.div`
	display: flex;
	align-items: center;
	flex: 1;
	height: 34px;
	margin-left: 8px;
	padding: 0 8px 0 5px;
	border-radius: 17px;
	background: #ebeef6;
`;

const SiteInfo = styled.button`
	display: grid;
	place-items: center;
	width: 24px;
	height: 24px;
	border-radius: 50%;
	background: #fff;
	color: #222;
`;

const Address = styled.input`
	flex: 1;
	margin-left: 8px;
	border: 0;
	padding: 0;
	background: none;
	color: #2b2d30;
	font-family: ${systemFont};
	font-size: 14px;
`;

const OmniButton = styled.button`
	display: grid;
	place-items: center;
	width: 32px;
	height: 34px;
	color: #3c3f43;
`;

const Extensions = styled.div`
	display: flex;
	align-items: center;
	margin-left: 8px;
`;

const Divider = styled.i`
	width: 2px;
	height: 17px;
	margin: 0 8px;
	background: #d5e2fb;
`;

const Avatar = styled.button`
	width: 20px;
	height: 20px;
	margin: 0 8px;
	border-radius: 50%;
	background: #7448b8;
	color: #fff;
	font-size: 11px;
`;

const Page = styled.div`
	position: relative;
	display: flex;
	flex: 1;
	overflow: hidden;
`;

const Side = styled.aside`
	width: 330px;
	background: #2f404c;
	color: #a5b1be;
	font-weight: 700;
`;

const Profile = styled.div`
	display: flex;
	flex-direction: column;
	gap: 13px;
	padding: 54px 37px 50px;
	line-height: 28px;
	strong {
		color: #dfe4ed;
	}
	a {
		display: flex;
		align-items: center;
		gap: 8px;
		color: #8095a8;
		font-weight: 400;
	}
`;

const MenuGroup = styled.div`
	${({ $open }) =>
		$open &&
		css`
			border-left: 6px solid #22b98b;
			background: #2a3843;
		`}
`;

const MenuLink = styled.a`
	display: flex;
	align-items: center;
	gap: 13px;
	height: 68px;
	padding: 0 30px 0 37px;
	background: ${({ $active }) => ($active ? '#2a3843' : 'transparent')};
	color: ${({ $active }) => ($active ? '#fff' : 'inherit')};
	span {
		flex: 1;
	}
	> svg:first-child {
		width: auto;
	}
`;

const SubMenu = styled.div`
	display: flex;
	flex-direction: column;
	padding: 2px 0 15px 77px;
	line-height: 46px;
`;

const Main = styled.main`
	display: flex;
	flex-direction: column;
	flex: 1;
	min-width: 0;
	background: #f1f3f3;
`;

const TopBar = styled.div`
	display: flex;
	align-items: center;
	justify-content: space-between;
	height: 84px;
	padding: 0 37px 0 30px;
	background: #fff;
`;

const MenuToggle = styled.button`
	display: grid;
	place-items: center;
	width: 55px;
	height: 43px;
	border-radius: 4px;
	background: #738dfa;
	color: #fff;
`;

const LogOut = styled.a`
	display: flex;
	align-items: center;
	gap: 16px;
	color: #999c9e;
	font-size: 21px;
	font-weight: 700;
`;

const PageTabs = styled.div`
	display: flex;
	height: 64px;
	border-top: 1px solid #e7e7e7;
	border-bottom: 3px solid #2f404c;
	background: #fafafa;
	color: #999;
`;

const TabControl = styled.button`
	display: flex;
	align-items: center;
	justify-content: center;
	gap: 4px;
	width: ${({ $width }) => $width}px;
	border-${({ $edge }) => $edge}: 1px solid #eee;
	background: #fff;
	font-size: 20px;
`;

const PageTab = styled.a`
	display: flex;
	align-items: center;
	gap: 4px;
	padding: 0 21px 0 22px;
	border-right: 1px solid #eee;
	white-space: nowrap;
	background: ${({ $active }) => ($active ? '#2f404c' : 'transparent')};
	color: ${({ $active }) => ($active ? '#a7b1c2' : 'inherit')};
	svg {
		color: ${({ $active }) => ($active ? '#dcdfe4' : '#ccc')};
	}
`;

const TabSpace = styled.div`
	flex: 1;
`;

const Content = styled.div`
	display: flex;
	flex-direction: column;
	gap: 15px;
	padding: 45px 37px 45px 38px;
`;

const Card = styled.section`
	padding: 15px 15px 31px;
	border-radius: 9px;
	background: #fff;
	box-shadow: 0 2px 4px rgba(0, 0, 0, 0.16);
`;

const SearchCard = styled(Card)`
	display: flex;
	align-items: center;
	padding: 15px 15px 38px 94px;
	label {
		width: 86px;
		color: #111;
		font-size: 21px;
	}
`;

const TitleInput = styled.input`
	width: 362px;
	height: 57px;
	margin-right: 30px;
	padding: 0 15px;
	border: 1px solid #e6e6e6;
	border-radius: 3px;
	font-size: 21px;
	&::placeholder {
		color: #757575;
	}
`;

const PrimaryButton = styled.button`
	display: block;
	width: 96px;
	height: 57px;
	border-radius: 3px;
	background: #738dfa;
	color: #fff;
	font-size: 21px;
`;

const TableBox = styled.div`
	margin-top: 15px;
	border: 1px solid #e6e6e6;
`;

const TableArea = styled.div`
	min-height: 684px;
`;

const Table = styled.table`
	width: 100%;
	table-layout: fixed;
	border-collapse: separate;
	border-spacing: 0;
	font-size: 21px;
	.actions {
		width: 346px;
	}
	.gutter {
		width: 6px;
	}
	th,
	td {
		height: 58px;
		padding: 0 0 0 22px;
		border: solid #e6e6e6;
		border-width: 0 1px 1px 0;
		overflow: hidden;
		text-align: left;
		font-weight: 400;
		white-space: nowrap;
	}
	th {
		height: 57px;
		background: #f1f1f1;
	}
	th:last-child,
	td:last-child {
		padding: 0;
		border-right: 0;
	}
	td:last-child {
		border-bottom: 0;
	}
`;

const fixedShadow = css`
	box-shadow: -6px 0 6px -6px rgba(0, 0, 0, 0.16);
`;

const FixedHead = styled.th`
	${fixedShadow}
`;

const FixedCell = styled.td`
	${fixedShadow}
`;

const Actions = styled.div`
	display: flex;
	gap: 15px;
`;

const ActionButton = styled.button`
	width: 51px;
	height: 33px;
	border-radius: 3px;
	background: ${({ $color }) => $color};
	color: #fff;
	font-size: 18px;
`;

const Pager = styled.div`
	display: flex;
	align-items: center;
	height: 64px;
	padding: 0 8px 2px;
	border-top: 1px solid #e6e6e6;
	color: #333;
	font-size: 18px;
`;

const pagerBox = css`
	height: 39px;
	border: 1px solid #e2e2e2;
	border-radius: 3px;
	background: #fff;
	color: #111;
	font-size: 18px;
`;

const PageArrow = styled.button`
	display: grid;
	place-items: center;
	width: 46px;
`;

const CurrentPage = styled.button`
	width: 46px;
	height: 39px;
	margin: 0 5px;
	border-radius: 3px;
	background: #738dfa;
	color: #fff;
	font-size: 18px;
`;

const JumpLabel = styled.label`
	display: flex;
	align-items: center;
	gap: 15px;
	margin-left: 6px;
	color: #999;
	input {
		${pagerBox}
		width: 60px;
		text-align: center;
	}
`;

const ConfirmButton = styled.button`
	${pagerBox}
	width: 68px;
	margin: 0 15px;
`;

const Total = styled.span`
	margin-right: 15px;
`;

const SizeWrap = styled.div`
	display: grid;
	align-items: center;
	select,
	svg {
		grid-area: 1 / 1;
	}
	select {
		${pagerBox}
		width: 111px;
		padding: 0 10px;
		appearance: none;
	}
	svg {
		justify-self: end;
		margin-right: 7px;
		pointer-events: none;
	}
`;

const ScrollBar = styled.div`
	display: flex;
	flex-direction: column;
	width: 17px;
	padding: 0 2px;
	background: #f1f1f1;
`;

const ScrollArrow = styled.svg`
	width: 13px;
	height: 17px;
`;

const ScrollThumb = styled.div`
	flex: 86;
	background: #c1c1c1;
`;

const ScrollRest = styled.div`
	flex: 14;
`;

const SideBubble = styled.div`
	position: absolute;
	top: 298px;
	right: -34px;
	width: 46px;
	height: 46px;
	border-radius: 50%;
	background: #c9fbec;
`;

const Timer = styled.div`
	position: absolute;
	right: 106px;
	bottom: 10px;
	display: grid;
	place-items: center;
	width: 49px;
	height: 49px;
	border: 2px solid #f4fbff;
	border-radius: 50%;
	background: linear-gradient(225deg, #3c85f5, #62c2f8);
	box-shadow: 0 1px 4px rgba(0, 0, 0, 0.2);
	color: #e4f5ff;
	font-family: ${systemFont};
	font-size: 13px;
`;

const Pointer = styled.svg`
	position: absolute;
	top: 396px;
	left: 479px;
	width: 13px;
	height: 21px;
`;

const TaskRow = styled.footer`
	display: flex;
	height: 30px;
	background: #1e1e1e;
	color: #eee;
	font-family: ${systemFont};
`;

const StartButton = styled.button`
	display: grid;
	place-items: center;
	width: 36px;
`;

const TaskSearch = styled.div`
	display: flex;
	align-items: center;
	gap: 11px;
	width: 258px;
	padding-left: 12px;
	border: 1px solid #c9c9c9;
	border-width: 0 1px 1px 0;
	background: #f2f2f2;
	input {
		flex: 1;
		min-width: 0;
		border: 0;
		padding: 0;
		background: none;
		font-size: 14px;
	}
	input::placeholder {
		color: #222;
	}
`;

const Apps = styled.div`
	display: flex;
	gap: 1px;
	margin-left: 3px;
`;

const AppButton = styled.button`
	display: grid;
	place-items: center;
	width: 36px;
	background: ${({ $tone }) => $tone || 'transparent'};
	box-shadow: ${({ $open, $line }) => ($open ? `inset 0 -2px ${$line || '#76b0de'}` : 'none')};
`;

const Tray = styled.div`
	display: flex;
	align-items: center;
	margin-left: auto;
	font-size: 13px;
`;

const TrayItem = styled.span`
	display: grid;
	place-items: center;
	width: ${({ $width }) => $width || 24}px;
	height: 30px;
`;

const DesktopEdge = styled.i`
	width: 5px;
	height: 30px;
	margin-left: 8px;
	border-left: 1px solid #777;
`;
